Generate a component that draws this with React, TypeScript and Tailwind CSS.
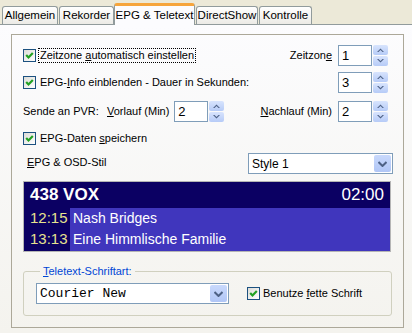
import React from 'react';

const ui = "font-['Tahoma','Liberation_Sans',sans-serif]";

function Check({ className = '' }: { className?: string }) {
  return (
    <span
      className={`inline-flex h-[13px] w-[13px] shrink-0 items-center justify-center border border-[#1c5180] bg-gradient-to-br from-[#dcdcd7] to-white ${className}`}
    >
      <svg width="11" height="11" viewBox="0 0 11 11">
        <path d="M2.2 5 L4.5 7.4 L8.8 3" stroke="#21a121" strokeWidth="2.2" fill="none" />
      </svg>
    </span>
  );
}

function Arrow({ dir }: { dir: 'up' | 'down' }) {
  return (
    <svg width="7" height="4" viewBox="0 0 7 4">
      <path
        d={dir === 'up' ? 'M0 4 L3.5 0.5 L7 4 L5.5 4 L3.5 2 L1.5 4 Z' : 'M0 0 L3.5 3.5 L7 0 L5.5 0 L3.5 2 L1.5 0 Z'}
        fill="#4d6185"
      />
    </svg>
  );
}

function Spin({ value }: { value: string }) {
  return (
    <div className="flex h-[21px]">
      <div className="flex h-[21px] w-[34px] items-center border border-[#7f9db9] bg-white pl-[3px] text-[13px]">
        {value}
      </div>
      <div className="ml-[1px] flex w-[15px] flex-col gap-[1px]">
        <div className="flex flex-1 items-center justify-center rounded-[2px] bg-gradient-to-b from-[#d8e4fd] to-[#b6cbf7]">
          <Arrow dir="up" />
        </div>
        <div className="flex flex-1 items-center justify-center rounded-[2px] bg-gradient-to-b from-[#d8e4fd] to-[#b6cbf7]">
          <Arrow dir="down" />
        </div>
      </div>
    </div>
  );
}

function Combo({ value, width, mono = false }: { value: string; width: string; mono?: boolean }) {
  return (
    <div className={`flex h-[21px] items-center border border-[#7f9db9] bg-white ${width}`}>
      <span className={`flex-1 pl-[3px] ${mono ? "font-['Liberation_Mono',monospace] text-[13px]" : 'text-[12px]'}`}>
        {value}
      </span>
      <div className="mr-[1px] flex h-[17px] w-[17px] items-center justify-center rounded-[2px] bg-gradient-to-b from-[#c9d9fc] to-[#b0c6f6]">
        <svg width="9" height="6" viewBox="0 0 9 6">
          <path d="M0.5 1 L4.5 5 L8.5 1" stroke="#4d6185" strokeWidth="2" fill="none" />
        </svg>
      </div>
    </div>
  );
}

function Tab({ label, width, active = false }: { label: string; width: string; active?: boolean }) {
  if (active) {
    return (
      <div
        className={`relative z-10 -mb-px flex h-[22px] items-center justify-center whitespace-nowrap rounded-t-[3px] border-x border-[#919b9c] border-t-[3px] border-t-[#f6a53c] bg-[#fcfcfe] text-[11.5px] ${width}`}
      >
        {label}
      </div>
    );
  }
  return (
    <div
      className={`ml-[1px] flex h-[18px] items-center justify-center whitespace-nowrap rounded-t-[3px] border-x border-t border-[#919b9c] bg-gradient-to-b from-white to-[#ecebe6] text-[11.5px] ${width}`}
    >
      {label}
    </div>
  );
}

export default function App() {
  return (
    <div className={`h-[333px] w-[412px] overflow-hidden bg-[#ece9d8] text-[11px] text-black ${ui}`}>
      <div className="flex h-[24px] items-end pl-[1px]">
        <Tab label="Allgemein" width="w-[56px]" />
        <Tab label="Rekorder" width="w-[55px]" />
        <Tab label="EPG & Teletext" width="w-[81px]" active />
        <Tab label="DirectShow" width="w-[62px]" />
        <Tab label="Kontrolle" width="w-[53px]" />
      </div>

      <div className="h-[309px] border-t border-[#919b9c] bg-gradient-to-b from-[#fcfcfe] to-[#f4f3ee] pl-[11px] pt-[9px]">
        <div className="flex h-[294px] w-[393px] flex-col border border-[#aca899] pl-[11px]">
          {/* Zeitzone */}
          <div className="mt-[10px] flex h-[21px] items-center pr-[15px]">
            <Check />
            <span className="ml-[2px] border border-dotted border-black px-[1px] leading-[13px]">
              Zeitzone <u>a</u>utomatisch einstellen
            </span>
            <span className="ml-auto mr-[6px]">
              Zeitzon<u>e</u>
            </span>
            <Spin value="1" />
          </div>

          {/* EPG-Info */}
          <div className="mt-[6px] flex h-[21px] items-center pr-[15px]">
            <Check />
            <span className="ml-[4px]">
              EPG-<u>I</u>nfo einblenden - Dauer in Sekunden:
            </span>
            <span className="ml-auto">
              <Spin value="3" />
            </span>
          </div>

          {/* PVR */}
          <div className="mt-[8px] flex h-[21px] items-center pr-[15px]">
            <span className="w-[84px]">Sende an PVR:</span>
            <span className="mr-[5px]">
              <u>V</u>orlauf (Min)
            </span>
            <Spin value="2" />
            <span className="ml-auto mr-[6px]">
              <u>N</u>achlauf (Min)
            </span>
            <Spin value="2" />
          </div>

          {/* EPG-Daten */}
          <div className="mt-[6px] flex h-[21px] items-center">
            <Check />
            <span className="ml-[4px]">
              EPG-Daten <u>s</u>peichern
            </span>
          </div>

          {/* Stil */}
          <div className="mt-[4px] flex h-[21px] items-center">
            <span className="ml-[4px] -mt-[3px]">
              <u>E</u>PG &amp; OSD-Stil
            </span>
            <span className="ml-auto mr-[10px]">
              <Combo value="Style 1" width="w-[145px]" />
            </span>
          </div>

          {/* OSD preview */}
          <div className="mt-[7px] flex h-[71px] w-[368px] flex-col border border-[#b5b5b5] font-['Tahoma','Liberation_Sans',sans-serif] text-white">
            <div className="flex h-[26px] items-center justify-between bg-[#0b0063] pl-[6px] pr-[6px] text-[17px] font-bold">
              <span>438 VOX</span>
              <span className="font-normal">02:00</span>
            </div>
            <div className="flex flex-1">
              <div className="flex w-[46px] flex-col bg-[#0b0063] pl-[6px] text-[15px] text-[#e7e38e]">
                <span className="flex h-[21px] items-center">12:15</span>
                <span className="flex h-[21px] items-center">13:13</span>
              </div>
              <div className="flex flex-1 flex-col bg-[#4036bd] pl-[3px] text-[14px]">
                <span className="flex h-[21px] items-center">Nash Bridges</span>
                <span className="flex h-[21px] items-center">Eine Himmlische Familie</span>
              </div>
            </div>
          </div>

          {/* Teletext */}
          <fieldset className="mt-[13px] h-[51px] w-[369px] rounded-[3px] border border-[#d0d0bf] pl-[12px]">
            <legend className="ml-[4px] px-[3px] leading-[13px] text-[#0046d5]">
              <u>T</u>eletext-Schriftart:
            </legend>
            <div className="mt-[5px] flex items-center">
              <Combo value="Courier New" width="w-[193px]" mono />
              <Check className="ml-[18px]" />
              <span className="ml-[3px]">
                Benutze <u>f</u>ette Schrift
              </span>
            </div>
          </fieldset>
        </div>
      </div>
    </div>
  );
}
